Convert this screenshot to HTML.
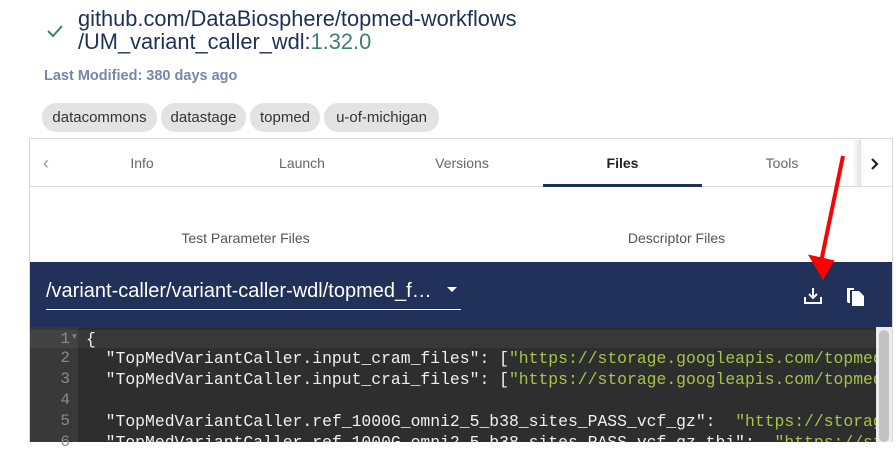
<!DOCTYPE html>
<html><head><style>
*{box-sizing:border-box;margin:0;padding:0}
body{width:896px;height:442px;overflow:hidden;background:#fff;font-family:"Liberation Sans",sans-serif;position:relative}
.abs{position:absolute}
.title{left:78px;top:7px;font-size:21.8px;line-height:23px;color:#1f3057}
.chip{position:absolute;top:103px;height:29px;border-radius:14px;background:#e3e3e3;font-size:15px;line-height:29px;color:#333;text-align:center}
.tab{position:absolute;top:140px;height:47px;line-height:47px;font-size:14px;color:#666;text-align:center}
.code{font-family:"Liberation Mono",monospace;font-size:16.4px;line-height:17px;color:#f0f0f0;white-space:pre}
.ln{position:absolute;left:30px;width:40px;text-align:right;font-family:"Liberation Mono",monospace;font-size:16px;line-height:17px;color:#8a8a8a}
.s{color:#a6c44a}
</style></head><body>
<svg class="abs" style="left:46px;top:24px" width="18" height="14"><path d="M2 7 L7 12 L16 2" stroke="#3e7d78" stroke-width="2" fill="none"/></svg>
<div class="abs title">github.com/DataBiosphere/topmed-workflows<br>/UM_variant_caller_wdl:<span style="color:#3e7d78">1.32.0</span></div>
<div class="abs" style="left:44px;top:68px;font-size:14.5px;font-weight:bold;color:#7a86a8">Last Modified: 380 days ago</div>
<div class="chip" style="left:42px;width:115px">datacommons</div>
<div class="chip" style="left:161px;width:85px">datastage</div>
<div class="chip" style="left:250px;width:70px">topmed</div>
<div class="chip" style="left:324px;width:115px">u-of-michigan</div>
<div class="abs" style="left:29px;top:138px;width:864px;height:304px;border:1px solid #d8d8d8;border-bottom:none"></div>
<div class="abs" style="left:30px;top:186px;width:862px;height:1px;background:#ddd"></div>
<div class="tab" style="left:36px;width:20px;font-size:18px;color:#999">‹</div>
<div class="tab" style="left:92px;width:100px">Info</div>
<div class="tab" style="left:252px;width:100px">Launch</div>
<div class="tab" style="left:412px;width:100px">Versions</div>
<div class="tab" style="left:543px;width:159px;color:#222;font-weight:bold">Files</div>
<div class="abs" style="left:543px;top:184px;width:159px;height:3px;background:#1f3057"></div>
<div class="tab" style="left:732px;width:100px">Tools</div>
<div class="abs" style="left:852px;top:140px;width:8px;height:46px;background:linear-gradient(to right,#fff,#e6e6e6)"></div>
<div class="abs" style="left:860px;top:139px;width:1px;height:47px;background:#ddd"></div>
<svg class="abs" style="left:870px;top:157px" width="10" height="14"><path d="M2 2 L7 7 L2 12" stroke="#222" stroke-width="2.2" fill="none"/></svg>
<div class="abs" style="left:30px;top:230px;width:431px;text-align:center;font-size:14px;color:#555">Test Parameter Files</div>
<div class="abs" style="left:461px;top:230px;width:431px;text-align:center;font-size:14px;color:#555">Descriptor Files</div>
<div class="abs" style="left:30px;top:262px;width:862px;height:65px;background:#21315a"></div>
<div class="abs" style="left:46px;top:280px;font-size:20px;color:#fff">/variant-caller/variant-caller-wdl/topmed_f…</div>
<svg class="abs" style="left:447px;top:287px" width="10" height="6"><path d="M0 0 L10 0 L5 5Z" fill="#fff"/></svg>
<div class="abs" style="left:46px;top:309px;width:415px;height:1px;background:#fff"></div>
<svg class="abs" style="left:803px;top:286px" width="20" height="20"><path d="M10 2 V12 M6 8 L10 12 L14 8 M2 11 V17 H18 V11" stroke="#fff" stroke-width="2" fill="none"/></svg>
<svg class="abs" style="left:845px;top:285px" width="22" height="22"><path d="M2 3 H9 V5 H5 V18 H4 Q2 18 2 16Z" fill="#fff"/><path d="M7 6 H14 L19 11 V21 H7Z" fill="#fff"/></svg>
<div class="abs" style="left:30px;top:327px;width:862px;height:115px;background:#2e2e2e"></div>
<div class="abs" style="left:30px;top:327px;width:48px;height:115px;background:#393939"></div>
<div class="abs" style="left:30px;top:330px;width:846px;height:18px;background:rgba(255,255,255,0.05)"></div>
<div class="abs" style="left:876px;top:327px;width:16px;height:115px;background:#ececec"></div>
<div class="abs" style="left:879px;top:330px;width:10px;height:112px;background:#c2c2c2;border-radius:5px"></div>
<div class="ln" style="top:331px">1</div><div class="abs" style="left:72px;top:331px;font-size:9px;color:#888">▾</div>
<div class="ln" style="top:350px">2</div>
<div class="ln" style="top:371px">3</div>
<div class="ln" style="top:392px">4</div>
<div class="ln" style="top:413px">5</div>
<div class="ln" style="top:434px">6</div>
<div class="abs" style="left:86px;top:330px;width:790px;height:112px;overflow:hidden">
<div class="code" style="position:absolute;top:1px">{</div>
<div class="code" style="position:absolute;top:20px">  "TopMedVariantCaller.input_cram_files": [<span class="s">"https://storage.googleapis.com/topmed_workflow</span></div>
<div class="code" style="position:absolute;top:41px">  "TopMedVariantCaller.input_crai_files": [<span class="s">"https://storage.googleapis.com/topmed_workflow</span></div>
<div class="code" style="position:absolute;top:83px">  "TopMedVariantCaller.ref_1000G_omni2_5_b38_sites_PASS_vcf_gz":  <span class="s">"https://storage.googleapis</span></div>
<div class="code" style="position:absolute;top:104px">  "TopMedVariantCaller.ref_1000G_omni2_5_b38_sites_PASS_vcf_gz_tbi":  <span class="s">"https://storage</span></div>
</div>
<svg class="abs" style="left:0;top:0" width="896" height="442"><path d="M843 156 L821 262" stroke="#f00" stroke-width="4"/><path d="M810 256 L823 278 L833 261Z" fill="#f00" stroke="#f00" stroke-width="2"/></svg>
</body></html>
